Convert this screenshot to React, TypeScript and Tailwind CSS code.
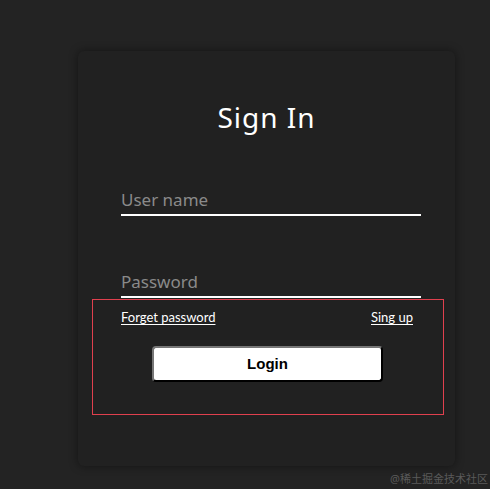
import React from "react";

export default function App() {
  return (
    <div className="relative h-[489px] w-full overflow-hidden bg-[#232323] pl-[78px] pt-[51px]">
      <div className="flex h-[415px] w-[377px] flex-col rounded-[6px] bg-[#212121] shadow-[0_0_10px_rgba(0,0,0,0.45)]">
        <h1 className="mt-[47px] text-center text-[28px] leading-[38px] tracking-[1px] text-white [font-family:'Noto_Sans',sans-serif]">
          Sign In
        </h1>
        <input
          type="text"
          placeholder="User name"
          className="ml-[43px] mt-[50px] h-[30px] w-[300px] border-b-2 border-white bg-transparent p-0 pb-[2px] text-[17px] text-white outline-none placeholder:text-[#8a8a8a] [font-family:'Noto_Sans',sans-serif]"
        />
        <input
          type="password"
          placeholder="Password"
          className="ml-[43px] mt-[52px] h-[30px] w-[300px] border-b-2 border-white bg-transparent p-0 pb-[2px] text-[17px] text-white outline-none placeholder:text-[#8a8a8a] [font-family:'Noto_Sans',sans-serif]"
        />
        <div className="ml-[14px] mt-[1px] flex h-[116px] w-[352px] flex-col border border-solid border-[#e0404e] pl-[28px] pr-[30px] pt-[8px]">
          <div className="flex items-center justify-between text-[13px] leading-[18px] text-white [font-family:'Lato',sans-serif]">
            <a href="#" className="underline underline-offset-[2px]">
              Forget password
            </a>
            <a href="#" className="underline underline-offset-[2px]">
              Sing up
            </a>
          </div>
          <button
            type="button"
            className="ml-[31px] mt-[20px] h-[36px] w-[231px] rounded-[4px] border-2 border-b-black border-l-[#777] border-r-black border-t-[#777] bg-white text-[15px] font-bold text-black [font-family:'Liberation_Sans',Arial,sans-serif]"
          >
            Login
          </button>
        </div>
      </div>
      <div className="absolute bottom-[2px] right-[2px] text-[11px] leading-[16px] text-[#5a5a5a] [font-family:'Noto_Sans','Noto_Sans_CJK_SC',sans-serif]">
        @稀土掘金技术社区
      </div>
    </div>
  );
}
